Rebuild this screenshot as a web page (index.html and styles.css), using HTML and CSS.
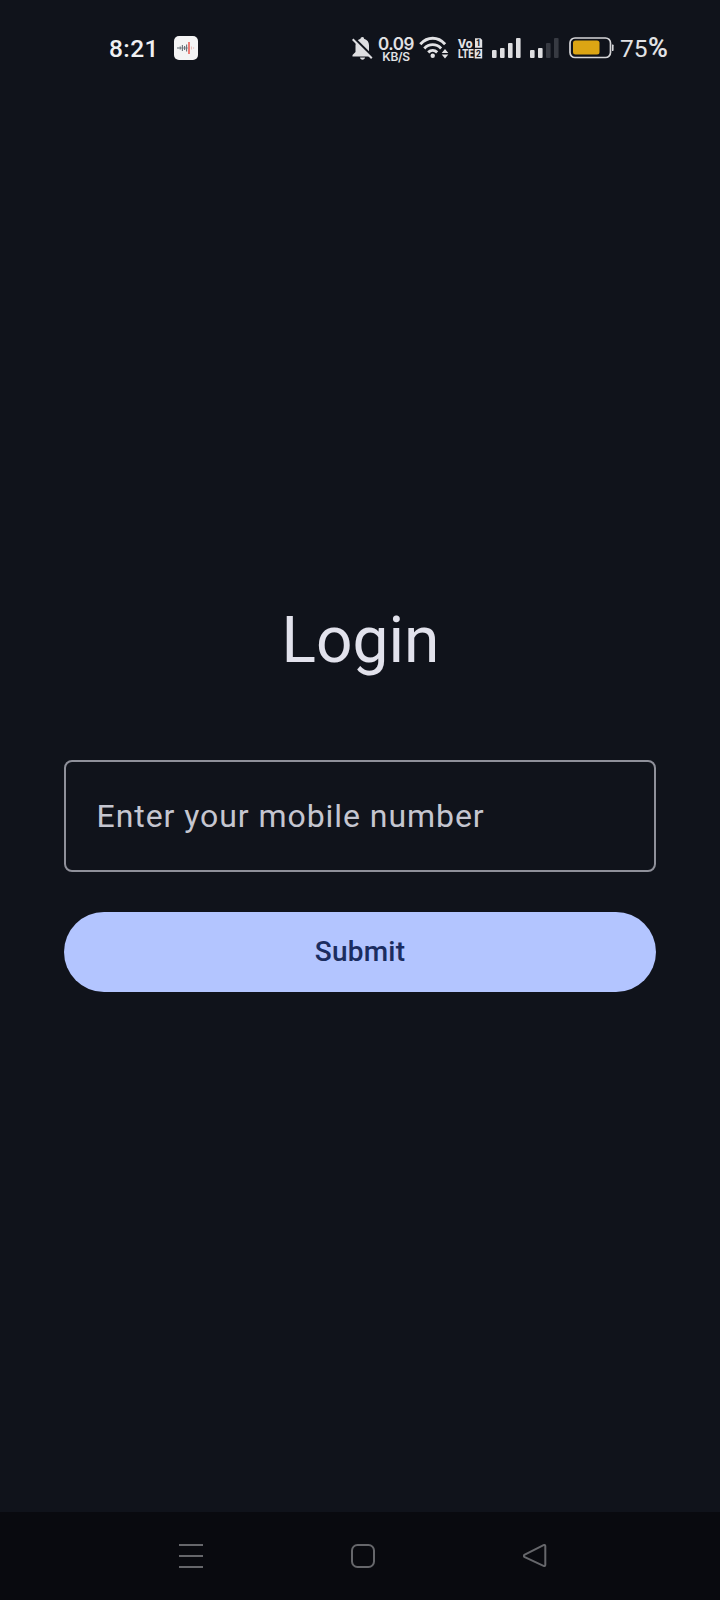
FILE: index.html
```html
<!DOCTYPE html>
<html lang="en">
<head>
<meta charset="utf-8">
<title>Login</title>
<link rel="stylesheet" href="styles.css">
</head>
<body>
<div class="screen">
  <header class="status">
    <span class="clock">8:21</span>
    <svg class="recorder" width="24" height="24" viewBox="0 0 24 24">
      <rect width="24" height="24" rx="5" fill="#f4f4f5"/>
      <path d="M4 11.500v1M6.200 10.500v3M8.400 9v6M10.600 10v4M12.600 8.500v7" stroke="#667078" stroke-width="1.100"/>
      <path d="M3 12h11" stroke="#667078" stroke-width=".7"/>
      <path d="M15 6v12" stroke="#e8483f" stroke-width="1.400"/>
      <path d="M17.400 10.500v3M19.600 11.300v1.400" stroke="#e7b9b6"/>
    </svg>
    <div class="indicators">
      <svg class="bell" width="21" height="23" viewBox="0 0 21 23">
        <path d="M10.500 0c-1.200 0-2 .8-2 1.800C5.400 2.600 3.500 5 3.500 8.200V15L.5 18v1.500h19V18l-2.500-3V8.200c0-3.200-1.900-5.600-5-6.400 0-1-.3-1.800-1.500-1.800zM8 20.500c.2 1.400 1.200 2.200 2.500 2.200s2.300-.8 2.500-2.200z" fill="#dedee1"/>
        <path d="M1.800.8 21 20" stroke="#10131b" stroke-width="2.400"/>
        <path d="M.7 2.200 19.800 21.300" stroke="#dedee1" stroke-width="2"/>
      </svg>
      <div class="speed"><span class="rate">0.09</span><span class="unit">KB/S</span></div>
      <svg class="wifi" width="31" height="24" viewBox="0 0 31 24">
        <g fill="none" stroke="#e2e2e5" stroke-width="2.900">
          <path d="M1.300 8.200C8.500.2 18.900.2 26.100 8.200"/>
          <path d="M5.300 12.400c4.800-5 12-5 16.800 0"/>
          <path d="M9.200 16.400c2.700-2.700 6.300-2.700 9 0"/>
        </g>
        <circle cx="13.700" cy="19.800" r="2.200" fill="#e2e2e5"/>
        <path d="M26 13l3.300 4h-6.600zM26 22.500l3.300-4h-6.600z" fill="#e2e2e5"/>
      </svg>
      <svg class="volte" width="25" height="21" viewBox="0 0 25 21">
        <g class="volte-text" fill="#e2e2e5">
          <text x="0" y="9.500" textLength="14.500" lengthAdjust="spacingAndGlyphs">Vo</text>
          <text x="0" y="20.200" textLength="15.500" lengthAdjust="spacingAndGlyphs">LTE</text>
        </g>
        <path d="M17 .3h5.500l1.700 1.700v7.700H17z" fill="#e2e2e5"/>
        <rect x="16.700" y="11" width="7.500" height="9.500" fill="#e2e2e5"/>
        <g class="sim" fill="#10131b">
          <text x="18" y="8.200">1</text>
          <text x="18" y="18.800">2</text>
        </g>
      </svg>
      <svg class="bars" width="29" height="20" viewBox="0 0 29 20" fill="#dedee1">
        <rect y="12" width="4.600" height="8" rx="1"/><rect x="8" y="10" width="4.600" height="10" rx="1"/><rect x="16" y="5" width="4.600" height="15" rx="1"/><rect x="24" width="4.600" height="20" rx="1"/>
      </svg>
      <svg class="bars" width="29" height="20" viewBox="0 0 29 20" fill="#dedee1">
        <rect y="12" width="4.600" height="8" rx="1"/><rect x="8" y="10" width="4.600" height="10" rx="1"/><g fill="#373a42"><rect x="16" y="5" width="4.600" height="15" rx="1"/><rect x="24" width="4.600" height="20" rx="1"/></g>
      </svg>
      <svg class="battery" width="46" height="22" viewBox="0 0 46 22">
        <rect x="1" y="1" width="40.500" height="19.500" rx="5" fill="none" stroke="#d5d5d8" stroke-width="1.700"/>
        <rect x="4" y="3.500" width="26.500" height="14" rx="2.500" fill="#dca514"/>
        <path d="M43 7.500h.8q.8 0 .8.800v5q0 .8-.8.800H43z" fill="#d5d5d8"/>
      </svg>
      <span class="percent">75<b>%</b></span>
    </div>
  </header>

  <main class="login">
    <h1 class="title">Login</h1>
    <div class="field">Enter your mobile number</div>
    <button class="submit" type="button">Submit</button>
  </main>

  <nav class="navbar">
    <svg width="24" height="24" viewBox="0 0 24 24"><path d="M0 1h24M0 12h24M0 23h24"/></svg>
    <svg width="24" height="24" viewBox="0 0 24 24"><rect x="1" y="1" width="22" height="22" rx="5.500"/></svg>
    <svg width="24" height="24" viewBox="0 0 24 24"><path d="M1.800 10.700 20.500 1.100Q22.300.5 22.300 2.300v18.400q0 1.800-1.800 1.200L1.800 13.200q-2-1.200 0-2.500z"/></svg>
  </nav>
</div>
</body>
</html>
```

FILE: styles.css
```css
* {
  box-sizing: border-box;
}

body {
  margin: 0;
  background: #10131b;
  font-family: Roboto, "Liberation Sans", sans-serif;
}

.screen {
  display: flex;
  flex-direction: column;
  width: 720px;
  height: 1600px;
}

.status {
  display: flex;
  align-items: center;
  height: 96px;
  padding: 0 48px 0 109px;
  color: #f0f0f2;
}

.clock {
  width: 65px;
  padding-top: 2px;
  font-size: 24.5px;
  font-weight: 500;
  line-height: 28px;
  letter-spacing: 0.4px;
}

.indicators {
  display: flex;
  align-items: center;
  height: 28px;
  margin-left: 154px;
  color: #e2e2e5;
}

.indicators > * {
  flex: none;
}

.speed {
  display: flex;
  flex-direction: column;
  align-items: center;
  width: 36px;
  margin-left: 5px;
  padding-top: 4px;
  font-family: Inter, sans-serif;
  font-weight: 600;
}

.rate {
  font-size: 17px;
  line-height: 14px;
  letter-spacing: -0.5px;
}

.unit {
  font-size: 12px;
  line-height: 12px;
  letter-spacing: -0.3px;
}

.wifi {
  margin-left: 5px;
}

.volte {
  margin-left: 8px;
  overflow: visible;
}

.volte-text {
  font: 800 12.5px Roboto, sans-serif;
}

.sim {
  font: 700 8.5px Roboto, sans-serif;
}

.bars {
  margin-left: 9px;
}

.battery {
  margin-left: 10px;
}

.percent {
  margin-left: 5px;
  font-size: 24.5px;
  line-height: 28px;
  white-space: nowrap;
}

.percent b {
  margin-left: 0.5px;
  font-size: 27px;
  font-weight: 600;
}

.login {
  display: flex;
  flex: 1;
  flex-direction: column;
  padding: 505px 64px 0;
}

.title {
  margin: 0 0 79px;
  padding-left: 1px;
  color: #e2e2ec;
  font-size: 64px;
  font-weight: 400;
  line-height: 80px;
  text-align: center;
}

.field {
  height: 112px;
  padding: 0 30.5px;
  border: 2px solid #8f909a;
  border-radius: 8px;
  color: #c5c6d0;
  font-size: 32px;
  line-height: 108px;
  letter-spacing: 0.94px;
}

.submit {
  height: 80px;
  margin-top: 40px;
  padding: 0;
  border: 0;
  border-radius: 40px;
  background: #b3c5ff;
  color: #1b2d60;
  font: 500 28px/40px Roboto, sans-serif;
  letter-spacing: 0.25px;
}

.navbar {
  display: flex;
  gap: 148px;
  height: 88px;
  padding: 32px 0 0 179px;
  background: #090a0f;
}

.navbar svg {
  fill: none;
  stroke: #66676b;
  stroke-width: 2;
}
```
